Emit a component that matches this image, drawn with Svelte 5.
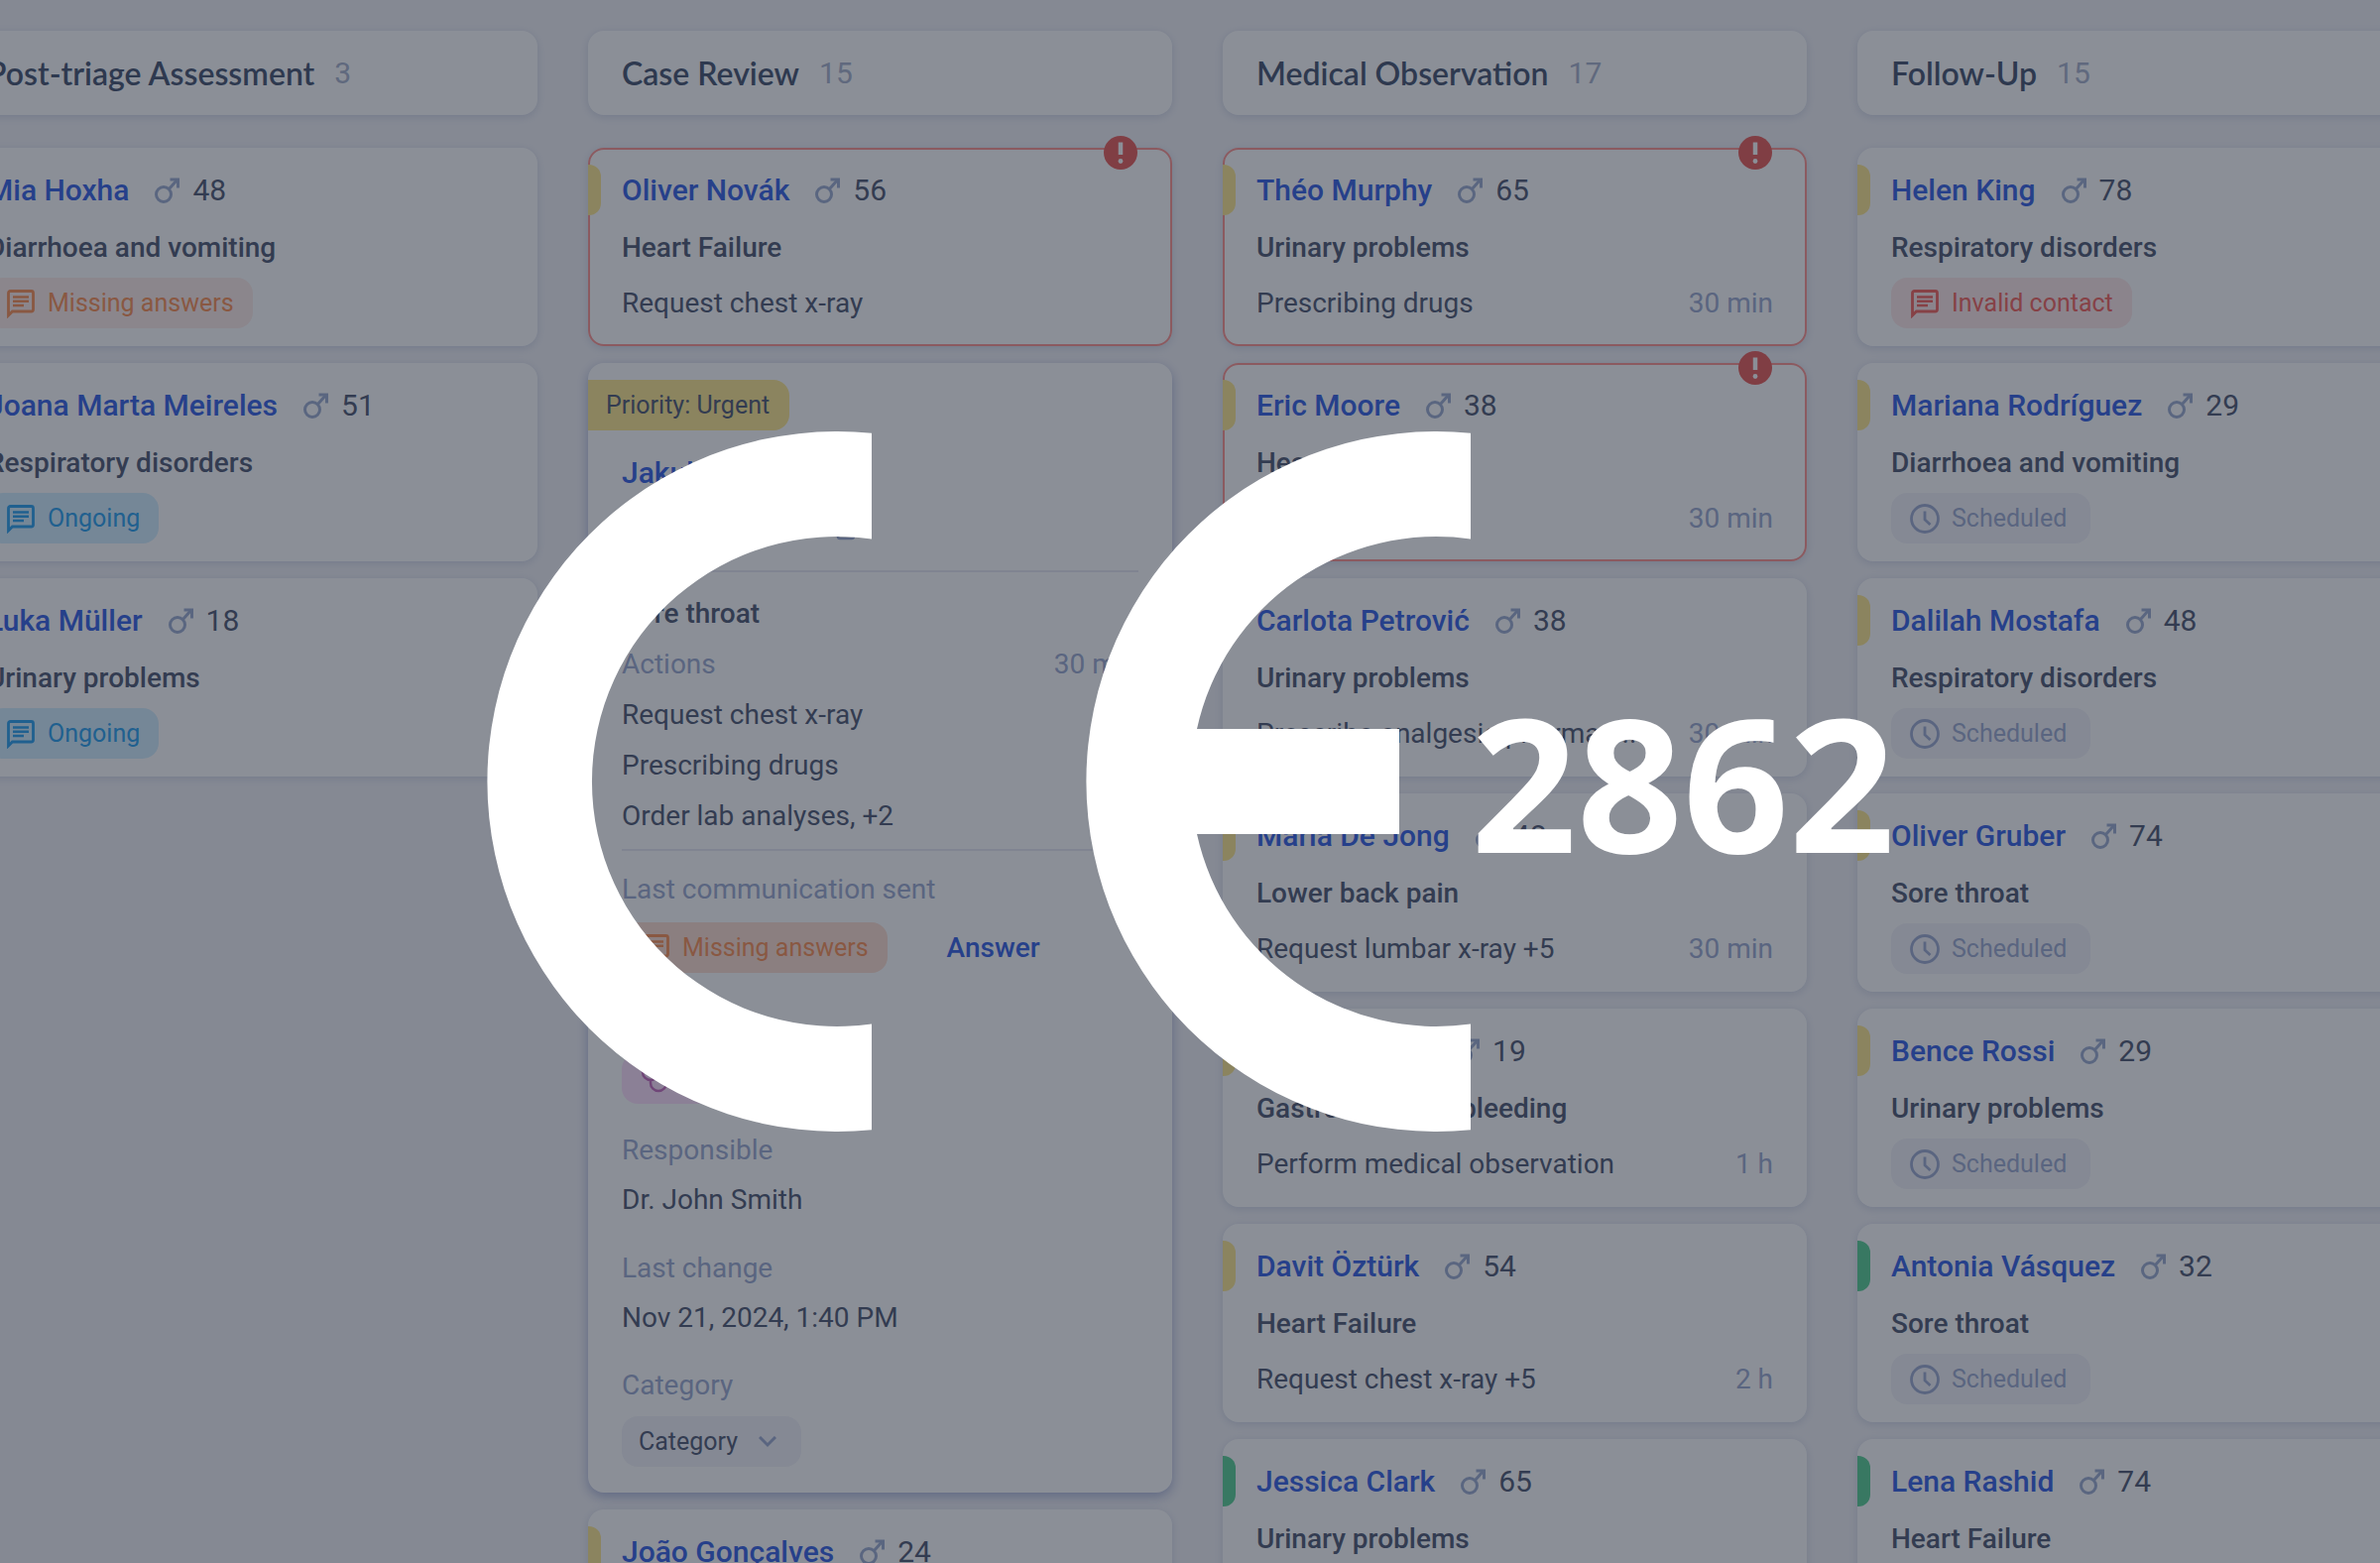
<script lang="ts">
  type Chip = { label: string, tone: 'orange' | 'blue' | 'red' | 'grey', icon: 'chat' | 'clock' }
  type Patient = {
    name: string
    age?: number
    diagnosis: string
    priority?: 'urgent' | 'normal'
    alert?: boolean
    action?: string
    time?: string
    chip?: Chip
    open?: boolean
  }
  type Column = { title: string, count: number, patients: Patient[] }

  const missing: Chip = { label: 'Missing answers', tone: 'orange', icon: 'chat' }
  const ongoing: Chip = { label: 'Ongoing', tone: 'blue', icon: 'chat' }
  const invalid: Chip = { label: 'Invalid contact', tone: 'red', icon: 'chat' }
  const scheduled: Chip = { label: 'Scheduled', tone: 'grey', icon: 'clock' }

  const columns: Column[] = [
    {
      title: 'Post-triage Assessment',
      count: 3,
      patients: [
        { name: 'Mia Hoxha', age: 48, diagnosis: 'Diarrhoea and vomiting', chip: missing },
        { name: 'Joana Marta Meireles', age: 51, diagnosis: 'Respiratory disorders', chip: ongoing },
        { name: 'Luka Müller', age: 18, diagnosis: 'Urinary problems', chip: ongoing },
      ],
    },
    {
      title: 'Case Review',
      count: 15,
      patients: [
        { name: 'Oliver Novák', age: 56, diagnosis: 'Heart Failure', priority: 'urgent', alert: true, action: 'Request chest x-ray' },
        { name: 'Jakub', diagnosis: 'Sore throat', open: true, time: '30 min' },
        { name: 'João Gonçalves', age: 24, diagnosis: 'Sore throat', priority: 'urgent', action: 'Prescribing drugs' },
      ],
    },
    {
      title: 'Medical Observation',
      count: 17,
      patients: [
        { name: 'Théo Murphy', age: 65, diagnosis: 'Urinary problems', priority: 'urgent', alert: true, action: 'Prescribing drugs', time: '30 min' },
        { name: 'Eric Moore', age: 38, diagnosis: 'Heart Failure', priority: 'urgent', alert: true, action: 'Request x-ray', time: '30 min' },
        { name: 'Carlota Petrović', age: 38, diagnosis: 'Urinary problems', priority: 'urgent', action: 'Prescribe analgesic pharmac...', time: '30 min' },
        { name: 'Maria De Jong', age: 48, diagnosis: 'Lower back pain', priority: 'urgent', action: 'Request lumbar x-ray +5', time: '30 min' },
        { name: 'Sofia Jansen', age: 19, diagnosis: 'Gastrointestinal bleeding', priority: 'urgent', action: 'Perform medical observation', time: '1 h' },
        { name: 'Davit Öztürk', age: 54, diagnosis: 'Heart Failure', priority: 'urgent', action: 'Request chest x-ray +5', time: '2 h' },
        { name: 'Jessica Clark', age: 65, diagnosis: 'Urinary problems', priority: 'normal', action: 'Prescribing drugs', time: '2 h' },
      ],
    },
    {
      title: 'Follow-Up',
      count: 15,
      patients: [
        { name: 'Helen King', age: 78, diagnosis: 'Respiratory disorders', priority: 'urgent', chip: invalid },
        { name: 'Mariana Rodríguez', age: 29, diagnosis: 'Diarrhoea and vomiting', priority: 'urgent', chip: scheduled },
        { name: 'Dalilah Mostafa', age: 48, diagnosis: 'Respiratory disorders', priority: 'urgent', chip: scheduled },
        { name: 'Oliver Gruber', age: 74, diagnosis: 'Sore throat', priority: 'urgent', chip: scheduled },
        { name: 'Bence Rossi', age: 29, diagnosis: 'Urinary problems', priority: 'urgent', chip: scheduled },
        { name: 'Antonia Vásquez', age: 32, diagnosis: 'Sore throat', priority: 'normal', chip: scheduled },
        { name: 'Lena Rashid', age: 74, diagnosis: 'Heart Failure', priority: 'normal', chip: scheduled },
      ],
    },
  ]

  const actions = ['Request chest x-ray', 'Prescribing drugs', 'Order lab analyses, +2']
</script>

{#snippet chipView(chip: Chip, strong = false)}
  <span class="chip {chip.tone}" class:strong>
    {#if chip.icon === 'chat'}
      <svg width="30" height="30" viewBox="0 0 30 30" aria-hidden="true">
        <path d="M2.5 27V4.5a2 2 0 0 1 2-2h21a2 2 0 0 1 2 2v16.500a2 2 0 0 1-2 2H6.500z" fill="none" stroke="currentColor" stroke-width="2.8" />
        <path d="M7 8.500h16M7 12.800h16M7 17h11" stroke="currentColor" stroke-width="2.6" />
      </svg>
    {:else}
      <svg width="30" height="30" viewBox="0 0 30 30" aria-hidden="true">
        <circle cx="15" cy="15" r="13.500" fill="none" stroke="currentColor" stroke-width="2.8" />
        <path d="M15 7.500v8.500l5.500 5" fill="none" stroke="currentColor" stroke-width="2.8" />
      </svg>
    {/if}
    {chip.label}
  </span>
{/snippet}

<div class="page">
  <main class="board">
    {#each columns as column}
      <section class="column">
        <header>
          <h2>{column.title}</h2>
          <span class="count">{column.count}</span>
        </header>
        <div class="cards">
          {#each column.patients as p}
            {#if p.open}
              <article class="card open">
                <span class="tag">Priority: Urgent</span>
                <div class="who"><a href="#patient">{p.name}</a></div>
                <button class="copy" aria-label="Copy">
                  <svg width="22" height="26" viewBox="0 0 22 26" aria-hidden="true">
                    <path d="M1.500 19V3a2 2 0 0 1 2-2H15" fill="none" stroke="currentColor" stroke-width="2" />
                    <rect x="5" y="6" width="16" height="18" rx="2" fill="none" stroke="currentColor" stroke-width="2.5" />
                  </svg>
                </button>
                <div class="block">
                  <p class="diagnosis">{p.diagnosis}</p>
                  <p class="muted split"><span>Actions</span><span>{p.time}</span></p>
                  {#each actions as action}
                    <p>{action}</p>
                  {/each}
                </div>
                <div class="block">
                  <p class="muted">Last communication sent</p>
                  <div class="contact">
                    {@render chipView(missing, true)}
                    <button class="answer">Answer</button>
                  </div>
                </div>
                <span class="team">
                  <svg width="30" height="30" viewBox="0 0 30 30" fill="none" stroke="currentColor" stroke-width="2.5" aria-hidden="true">
                    <path d="M7 2H4v7a8 8 0 0 0 16 0V2h-3M12 17v3a8 8 0 0 0 16 0v-4" />
                    <circle cx="28" cy="13" r="2" />
                  </svg>
                </span>
                <dl>
                  <div>
                    <dt>Responsible</dt>
                    <dd>Dr. John Smith</dd>
                  </div>
                  <div>
                    <dt>Last change</dt>
                    <dd>Nov 21, 2024, 1:40 PM</dd>
                  </div>
                </dl>
                <label for="category">Category</label>
                <div class="picker">
                  <select id="category"><option>Category</option></select>
                  <svg width="18" height="12" viewBox="0 0 18 12" aria-hidden="true">
                    <path d="M1 1l8 8 8-8" fill="none" stroke="currentColor" stroke-width="3" />
                  </svg>
                </div>
              </article>
            {:else}
              <article class="card" class:alert={p.alert}>
                {#if p.priority}<span class="priority {p.priority}"></span>{/if}
                {#if p.alert}
                  <svg class="badge" width="34" height="34" viewBox="0 0 34 34" role="img" aria-label="Alert">
                    <circle cx="17" cy="17" r="17" fill="#e95d59" />
                    <path d="M17 6.500v12.500" stroke="#fff" stroke-width="4.5" />
                    <circle cx="17" cy="25.500" r="2.4" fill="#fff" />
                  </svg>
                {/if}
                <div class="who">
                  <a href="#patient">{p.name}</a>
                  <svg width="25" height="26" viewBox="0 0 25 26" fill="none" stroke="currentColor" stroke-width="3" aria-hidden="true">
                    <circle cx="9" cy="17" r="7.500" />
                    <path d="M14.500 11.500l8-9" />
                    <path d="M15.500 2h8v8.500" />
                  </svg>
                  <span>{p.age}</span>
                </div>
                <p class="diagnosis">{p.diagnosis}</p>
                <div class="bottom">
                  {#if p.chip}{@render chipView(p.chip)}{/if}
                  {#if p.action}<span>{p.action}</span>{/if}
                  {#if p.time}<span class="muted">{p.time}</span>{/if}
                </div>
              </article>
            {/if}
          {/each}
        </div>
      </section>
    {/each}
  </main>

  <!-- conformity mark with the notified body number -->
  <div class="overlay">
    <svg width="992" height="706" viewBox="0 0 992 706" fill="#fff" role="img" aria-label="CE">
      <path d="M388 1.700A353 353 0 1 0 388 704.300V597.500A247 247 0 1 1 388 108.500Z" />
      <path d="M992 1.700A353 353 0 1 0 992 704.300V597.500A247 247 0 0 1 716 406H920V300H716A247 247 0 0 1 992 108.500Z" />
    </svg>
    <strong>2862</strong>
  </div>
</div>

<style>
  :global(body) { background: #f3f3f7; }
  .page { position: relative; height: 100vh; overflow: hidden; background: #f3f3f7; color: #4f5973; font: 400 28px/34px Roboto, "Liberation Sans", sans-serif; }
  .board { display: grid; grid-template-columns: repeat(4, minmax(0, 1fr)); gap: 51px; margin: 0 -62px 0 -47px; padding-top: 31px; }
  .column, .cards { display: flex; flex-direction: column; }
  .column { gap: 33px; }
  .cards { gap: 17px; }

  header { display: flex; align-items: center; gap: 20px; height: 85px; padding: 0 34px; border-radius: 16px; background: #fff; box-shadow: 0 2px 8px rgba(90, 115, 170, 0.22); }
  h2 { margin: 0; font: 600 32px/36px Lato, "Open Sans", sans-serif; color: #45536f; }
  .count { font-size: 30px; color: #a8b2cc; }

  .card { position: relative; box-sizing: border-box; height: 200px; padding: 26px 34px 18px; border-radius: 16px; background: #fff; box-shadow: 0 2px 8px rgba(90, 115, 170, 0.22); }
  .card.alert { outline: 2px solid #ff9490; outline-offset: -2px; }
  .priority { position: absolute; left: 0; top: 17px; width: 13px; height: 51px; border-radius: 0 12px 12px 0; }
  .priority.urgent { background: #ffe98f; }
  .priority.normal { background: #59d195; }
  .badge { position: absolute; right: 35px; top: -12px; }

  .who { display: flex; align-items: center; font-size: 30px; }
  .who a { color: #3561e5; font-weight: 500; text-decoration: none; }
  .who svg { margin: 0 13px 0 26px; color: #9dadd1; }
  p { margin: 0; }
  .diagnosis { margin-top: 24px; font-weight: 500; }
  .bottom { display: flex; align-items: center; justify-content: space-between; height: 51px; margin-top: 13px; }
  .muted, dt, label { color: #9dabd1; }

  .chip { display: inline-flex; align-items: center; gap: 12px; height: 51px; padding: 0 19px; border-radius: 16px; font-size: 25px; }
  .chip.orange { color: #fb9155; background: #ffece8; }
  .chip.orange.strong { background: #ffdfd1; }
  .chip.blue { color: #29a1ee; background: #d3efff; }
  .chip.red { color: #f5625c; background: #ffe9e9; }
  .chip.grey { color: #9dabd1; background: #f3f3f9; padding-right: 24px; }

  .card.open { display: flex; flex-direction: column; align-items: stretch; height: auto; padding: 17px 34px 26px; box-shadow: 0 4px 12px rgba(60, 85, 170, 0.4); }
  .tag { align-self: flex-start; height: 51px; margin: 0 0 26px -34px; padding: 0 20px 0 18px; border-radius: 0 16px 16px 0; background: #ffe98f; font-size: 25px; line-height: 51px; }
  button { border: 0; padding: 0; background: none; font: inherit; }
  .copy { align-self: flex-start; display: flex; margin: 25px 0 30px 213px; color: #9dabd1; }
  .block { padding: 16px 0 8px; border-top: 2px solid #e9e9f3; line-height: 51px; }
  .block + .block { padding: 13px 0 0; }
  .block .diagnosis { margin: 0; }
  .split { display: flex; justify-content: space-between; }
  .contact { display: flex; align-items: center; gap: 60px; margin-top: 8px; }
  .answer { color: #3561e5; font-weight: 500; }
  .team { box-sizing: border-box; width: 200px; height: 51px; margin: 81px 0 22px; padding: 10px 17px; border-radius: 16px; background: #ffe1fd; color: #c96dc1; }
  dl { display: grid; gap: 19px; margin: 0 0 18px; line-height: 50px; }
  dd { margin: 0; }
  label { line-height: 50px; }
  .picker { position: relative; align-self: flex-start; margin-top: 6px; color: #9dabd1; }
  select { appearance: none; width: 181px; height: 51px; padding: 0 17px; border: 0; border-radius: 16px; background: #f3f3f9; color: #4f5973; font: inherit; font-size: 25px; }
  .picker svg { position: absolute; right: 25px; top: 20px; pointer-events: none; }

  .overlay { position: absolute; inset: 0; display: flex; align-items: center; justify-content: center; padding-left: 2px; background: rgba(23, 31, 47, 0.5); }
  .overlay svg { flex: none; }
  strong { color: #fff; font: 700 187px/220px "Open Sans", sans-serif; }
</style>
